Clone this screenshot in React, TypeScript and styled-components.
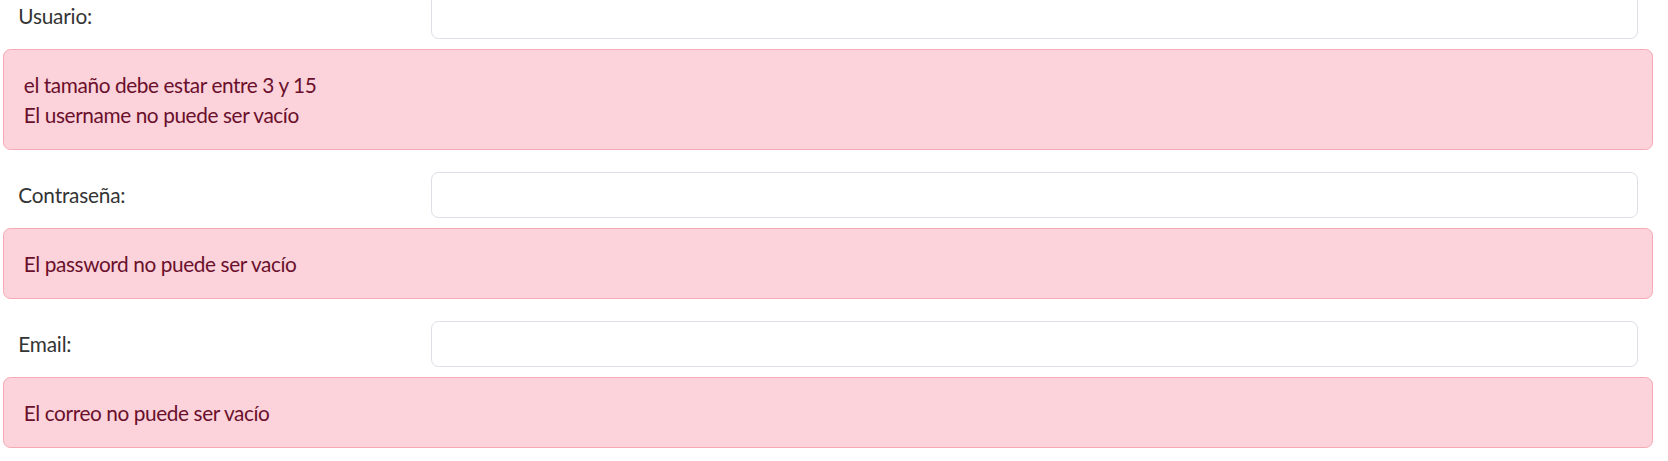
import React from "react";
import styled, { createGlobalStyle } from "styled-components";

const Global = createGlobalStyle`
  html, body { margin: 0; padding: 0; background: #ffffff; }
  body { font-family: Lato, "Noto Sans", sans-serif; overflow: hidden; }
  * { box-sizing: border-box; }
`;

const Form = styled.form`
  width: 1650px;
  margin: -7.2px 0 0 3.3px;
  display: flex;
  flex-direction: column;
`;

const Row = styled.div`
  display: grid;
  grid-template-columns: 412.5px 1fr;
  align-items: center;
`;

const Label = styled.label`
  padding-left: 15px;
  font-size: 20.8px;
  line-height: 30px;
  letter-spacing: -0.2px;
  color: #343434;
`;

const InputCell = styled.div`
  padding: 0 15px;
`;

const Input = styled.input`
  display: block;
  width: 100%;
  height: 46px;
  border: 1px solid #dfdde6;
  border-radius: 7.5px;
  background: #ffffff;
  outline: none;
`;

const Alert = styled.div`
  margin: 10.6px 0 21.4px;
  padding: 19.5px 19.5px;
  border: 1px solid #f6a8b5;
  border-radius: 7.5px;
  background: #fcd3da;
  color: #6a0f2c;
  font-size: 20.8px;
  line-height: 30px;
  letter-spacing: -0.4px;
`;

const Line = styled.div``;

type Field = { label: string; type: string; errors: string[] };

const fields: Field[] = [
  { label: "Usuario:", type: "text", errors: ["el tamaño debe estar entre 3 y 15", "El username no puede ser vacío"] },
  { label: "Contraseña:", type: "password", errors: ["El password no puede ser vacío"] },
  { label: "Email:", type: "email", errors: ["El correo no puede ser vacío"] },
];

export default function App() {
  return (
    <>
      <Global />
      <Form onSubmit={(e) => e.preventDefault()}>
        {fields.map((f) => (
          <React.Fragment key={f.label}>
            <Row>
              <Label>{f.label}</Label>
              <InputCell>
                <Input type={f.type} />
              </InputCell>
            </Row>
            <Alert>
              {f.errors.map((e) => (
                <Line key={e}>{e}</Line>
              ))}
            </Alert>
          </React.Fragment>
        ))}
      </Form>
    </>
  );
}
